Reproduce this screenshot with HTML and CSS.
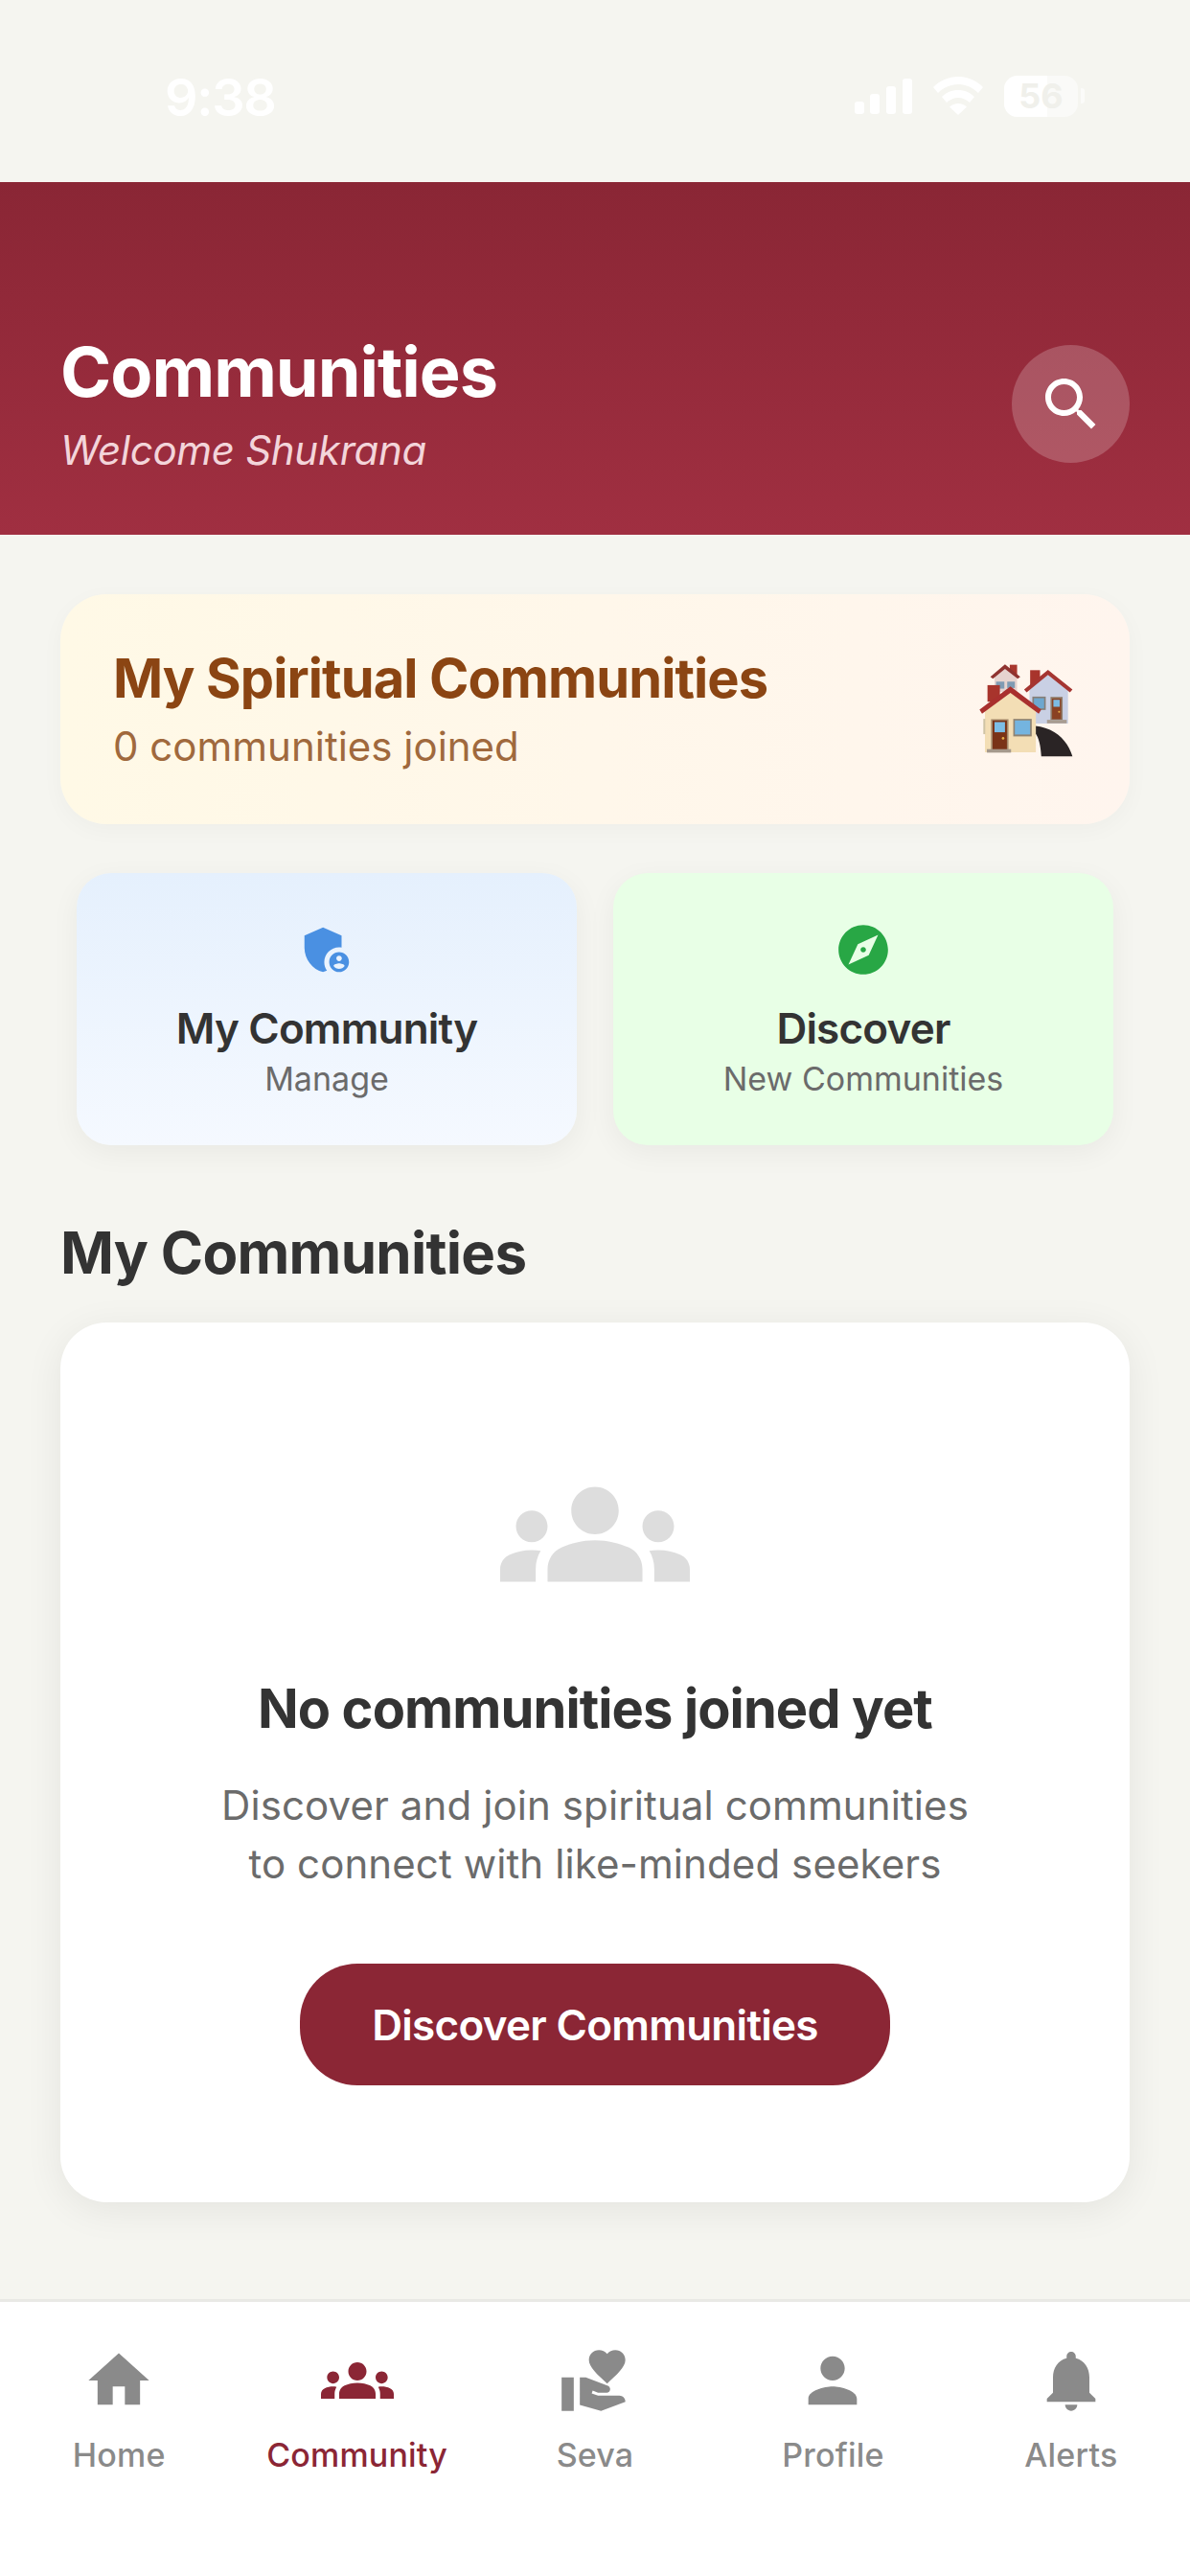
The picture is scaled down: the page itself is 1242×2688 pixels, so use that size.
FILE: index.html
```html
<!DOCTYPE html>
<html lang="en">
<head>
<meta charset="utf-8">
<title>Communities</title>
<link rel="stylesheet" href="styles.css">
</head>
<body>
<div class="app">
  <div class="status">
    <span class="time">9:38</span>
    <div class="status-icons">
      <svg class="signal" viewBox="0 0 60 37"><rect x="0" y="24" width="10" height="13" rx="3"/><rect x="16" y="16" width="10" height="21" rx="3"/><rect x="33" y="8" width="10" height="29" rx="3"/><rect x="50" y="0" width="10" height="37" rx="3"/></svg>
      <svg class="wifi" viewBox="0 0 52 40"><path d="M26 0C16 0 7 4 0 11l5 6c5.500-5.500 13-9 21-9s15.500 3.500 21 9l5-6C45 4 36 0 26 0z"/><path d="M26 14c-6.500 0-12.500 2.500-17 7l5 6c3-3 7.500-5 12-5s9 2 12 5l5-6c-4.500-4.500-10.500-7-17-7z"/><path d="M26 28c-3.500 0-6.500 1.300-9 3.500L26 40l9-8.500C32.500 29.300 29.500 28 26 28z"/></svg>
      <div class="battery-wrap">
        <div class="battery"><div class="battery-fill"></div><span class="battery-num">56</span></div>
        <div class="battery-cap"></div>
      </div>
    </div>
  </div>

  <header class="header">
    <div class="header-text">
      <h1 class="title">Communities</h1>
      <p class="welcome">Welcome Shukrana</p>
    </div>
    <div class="search">
      <svg class="search-icon" viewBox="0 0 24 24"><path d="M15.500 14h-.79l-.28-.27C15.410 12.590 16 11.110 16 9.500 16 5.910 13.090 3 9.500 3S3 5.910 3 9.500 5.910 16 9.500 16c1.610 0 3.090-.59 4.230-1.570l.27.28v.79l5 4.990L20.490 19l-4.990-5zm-6 0C7.010 14 5 11.990 5 9.500S7.010 5 9.500 5 14 7.010 14 9.500 11.990 14 9.500 14z"/></svg>
    </div>
  </header>

  <main class="main">
    <section class="banner">
      <div>
        <h2 class="banner-title">My Spiritual Communities</h2>
        <p class="banner-sub">0 communities joined</p>
      </div>
      <svg class="houses" viewBox="238 160 296 298">
        <!-- back house -->
        <rect x="333" y="165" width="23" height="35" fill="#a8372e"/>
        <path d="M285 200 L318 172 L356 200 V250 H285Z" fill="#e6d3cf"/>
        <rect x="290" y="218" width="26" height="22" fill="#7f9bb3"/>
        <rect x="325" y="218" width="24" height="20" fill="#7f9bb3"/>
        <path d="M272 203 L318 164 L366 203 L358 209 L318 178 L280 209Z" fill="#8f3330"/>
        <!-- right house -->
        <rect x="397" y="182" width="31" height="48" fill="#a8342c"/>
        <path d="M395 240 L453 192 L516 240 V350 H395Z" fill="#c9d0e4"/>
        <rect x="404" y="265" width="42" height="42" fill="#867f78"/>
        <rect x="409" y="270" width="32" height="32" fill="#6da7cf"/>
        <rect x="461" y="266" width="38" height="72" fill="#8f7a68"/>
        <rect x="466" y="271" width="28" height="65" fill="#8a4122"/>
        <rect x="470" y="275" width="20" height="22" fill="#7cbbe3"/>
        <circle cx="488" cy="313" r="3" fill="#e8b04a"/>
        <rect x="450" y="338" width="62" height="11" fill="#a89c90"/>
        <path d="M378 243 L453 181 L530 243 L522 252 L453 197 L386 252Z" fill="#a53531"/>
        <!-- road -->
        <path d="M413 357 C470 362 515 400 530 453 H432 C430 420 425 395 413 380Z" fill="#2a2425"/>
        <!-- front house -->
        <rect x="263" y="229" width="39" height="52" fill="#a8342c"/>
        <path d="M255 310 L335 250 L415 310 V440 H255Z" fill="#f3deb5"/>
        <rect x="274" y="336" width="55" height="96" fill="#a58a6c"/>
        <rect x="279" y="340" width="45" height="92" fill="#7a3317"/>
        <rect x="285" y="345" width="33" height="32" fill="#7cbde6"/>
        <circle cx="312" cy="396" r="4" fill="#e8b04a"/>
        <rect x="344" y="335" width="58" height="55" fill="#8f8372"/>
        <rect x="349" y="340" width="48" height="44" fill="#74b4df"/>
        <rect x="261" y="430" width="76" height="11" fill="#a5998c"/>
        <rect x="250" y="335" width="6" height="48" fill="#cfc3a5"/>
        <path d="M238 306 L335 233 L432 306 L424 319 L335 253 L246 319Z" fill="#a9302e"/>
      </svg>
    </section>

    <div class="actions">
      <article class="action action-blue">
        <svg class="action-icon icon-blue" viewBox="0 0 24 24"><path d="M17 11c.34 0 .67.04 1 .09V6.270L10.500 3 3 6.270v4.910c0 4.540 3.200 8.790 7.500 9.820.55-.13 1.080-.32 1.600-.55-.69-.98-1.100-2.170-1.100-3.450 0-3.310 2.690-6 6-6z"/><path d="M17 13c-2.210 0-4 1.790-4 4s1.790 4 4 4 4-1.790 4-4-1.790-4-4-4zm0 1.380c.62 0 1.120.51 1.120 1.120s-.51 1.120-1.120 1.120-1.120-.51-1.120-1.120.5-1.120 1.120-1.120zm0 5.370c-.93 0-1.740-.46-2.240-1.170.05-.72 1.510-1.080 2.240-1.080s2.190.36 2.240 1.080c-.5.71-1.310 1.170-2.240 1.170z"/></svg>
        <h3 class="action-title">My Community</h3>
        <p class="action-sub">Manage</p>
      </article>
      <article class="action action-green">
        <svg class="action-icon icon-green" viewBox="0 0 24 24"><path d="M12 10.900c-.61 0-1.100.49-1.100 1.100s.49 1.100 1.100 1.100c.61 0 1.100-.49 1.100-1.100s-.49-1.100-1.100-1.100zM12 2C6.480 2 2 6.480 2 12s4.480 10 10 10 10-4.480 10-10S17.520 2 12 2zm2.190 12.190L6 18l3.810-8.190L18 6l-3.810 8.190z"/></svg>
        <h3 class="action-title">Discover</h3>
        <p class="action-sub">New Communities</p>
      </article>
    </div>

    <h2 class="section-title">My Communities</h2>

    <section class="empty">
      <svg class="empty-icon" viewBox="0 0 24 24"><path d="M12 12.750c1.630 0 3.070.39 4.240.9 1.080.48 1.760 1.560 1.760 2.730V18H6v-1.610c0-1.180.68-2.260 1.760-2.730 1.170-.52 2.610-.91 4.240-.91zM4 13c1.100 0 2-.9 2-2s-.9-2-2-2-2 .9-2 2 .9 2 2 2zm1.130 1.100c-.37-.06-.74-.1-1.130-.1-.99 0-1.930.21-2.780.58C.48 14.900 0 15.620 0 16.430V18h4.500v-1.610c0-.83.23-1.610.63-2.290zM20 13c1.100 0 2-.9 2-2s-.9-2-2-2-2 .9-2 2 .9 2 2 2zm4 3.430c0-.81-.48-1.530-1.220-1.850-.85-.37-1.790-.58-2.780-.58-.39 0-.76.04-1.130.1.4.68.63 1.460.63 2.290V18H24v-1.570zM12 6c1.660 0 3 1.340 3 3s-1.340 3-3 3-3-1.340-3-3 1.340-3 3-3z"/></svg>
      <h3 class="empty-title">No communities joined yet</h3>
      <p class="empty-text">Discover and join spiritual communities<br>to connect with like-minded seekers</p>
      <button class="cta">Discover Communities</button>
    </section>
  </main>

  <nav class="tabs">
    <div class="tab">
      <svg class="tab-icon" viewBox="0 0 24 24"><path d="M10 20v-6h4v6h5v-8h3L12 3 2 12h3v8z"/></svg>
      <span class="tab-label">Home</span>
    </div>
    <div class="tab tab-active">
      <svg class="tab-icon" viewBox="0 0 24 24"><path d="M12 12.750c1.630 0 3.070.39 4.240.9 1.080.48 1.760 1.560 1.760 2.730V18H6v-1.610c0-1.180.68-2.260 1.760-2.730 1.170-.52 2.610-.91 4.240-.91zM4 13c1.100 0 2-.9 2-2s-.9-2-2-2-2 .9-2 2 .9 2 2 2zm1.130 1.100c-.37-.06-.74-.1-1.130-.1-.99 0-1.930.21-2.780.58C.48 14.900 0 15.620 0 16.430V18h4.500v-1.610c0-.83.23-1.610.63-2.290zM20 13c1.100 0 2-.9 2-2s-.9-2-2-2-2 .9-2 2 .9 2 2 2zm4 3.430c0-.81-.48-1.530-1.220-1.850-.85-.37-1.790-.58-2.780-.58-.39 0-.76.04-1.130.1.4.68.63 1.460.63 2.290V18H24v-1.570zM12 6c1.660 0 3 1.340 3 3s-1.340 3-3 3-3-1.340-3-3 1.340-3 3-3z"/></svg>
      <span class="tab-label">Community</span>
    </div>
    <div class="tab">
      <svg class="tab-icon" viewBox="0 0 24 24"><path d="M1 11h4v11H1zm15-7.750C16.650 2.490 17.660 2 18.700 2 20.550 2 22 3.450 22 5.300c0 2.270-2.910 4.900-6 7.700-3.090-2.810-6-5.440-6-7.700C10 3.450 11.450 2 13.300 2c1.040 0 2.050.49 2.700 1.250zM20 17h-7l-2.090-.73.33-.94L13 16h2.820c.65 0 1.180-.53 1.180-1.180 0-.49-.31-.93-.77-1.110L8.970 11H7v9.020L14 22l8.010-3c-.01-1.100-.9-2-2.010-2z"/></svg>
      <span class="tab-label">Seva</span>
    </div>
    <div class="tab">
      <svg class="tab-icon" viewBox="0 0 24 24"><path d="M12 12c2.210 0 4-1.790 4-4s-1.790-4-4-4-4 1.790-4 4 1.790 4 4 4zm0 2c-2.670 0-8 1.340-8 4v2h16v-2c0-2.660-5.330-4-8-4z"/></svg>
      <span class="tab-label">Profile</span>
    </div>
    <div class="tab">
      <svg class="tab-icon" viewBox="0 0 24 24"><path d="M12 22c1.100 0 2-.9 2-2h-4c0 1.100.89 2 2 2zm6-6v-5c0-3.070-1.640-5.640-4.500-6.320V4c0-.83-.67-1.500-1.500-1.500s-1.500.67-1.500 1.500v.68C7.630 5.360 6 7.920 6 11v5l-2 2v1h16v-1l-2-2z"/></svg>
      <span class="tab-label">Alerts</span>
    </div>
  </nav>
</div>
</body>
</html>
```

FILE: styles.css
```css
* { box-sizing: border-box; }
html, body { margin: 0; padding: 0; }
body { font-family: Inter, "Liberation Sans", sans-serif; background: #f5f5f0; }
h1, h2, h3, p { margin: 0; font-weight: inherit; }

.app { width: 1242px; height: 2688px; display: flex; flex-direction: column; background: #f5f5f0; overflow: hidden; }

.status { height: 190px; flex: none; display: flex; justify-content: space-between; align-items: center; padding: 20px 110px 10px 172px; }
.time { margin-top: 4px; font-size: 54px; font-weight: 600; color: #fff; line-height: 60px; letter-spacing: -1.3px; }
.status-icons { display: flex; align-items: center; gap: 22px; }
.signal { width: 60px; height: 37px; fill: #fff; }
.wifi { width: 52px; height: 40px; fill: #fff; }
.battery-wrap { display: flex; align-items: center; gap: 3px; }
.battery { position: relative; width: 77px; height: 43px; border-radius: 14px; background: rgba(255,255,255,.5); overflow: hidden; }
.battery-fill { position: absolute; left: 0; top: 0; bottom: 0; width: 58%; background: #fff; }
.battery-num { position: relative; display: block; text-align: center; font-size: 36px; line-height: 43px; font-weight: 700; color: #f0f0eb; }
.battery-cap { width: 4px; height: 16px; border-radius: 0 3px 3px 0; background: rgba(255,255,255,.6); }

.header { height: 368px; flex: none; display: flex; justify-content: space-between; align-items: flex-start; padding: 158px 63px 60px; background: linear-gradient(180deg, #8a2635, #a02f41); }
.title { font-size: 72px; line-height: 80px; font-weight: 700; color: #fff; letter-spacing: -1px; }
.welcome { margin-top: 14px; font-size: 42px; line-height: 56px; font-style: italic; color: #f3d5da; letter-spacing: -.3px; }
.search { margin-top: 12px; width: 123px; height: 123px; border-radius: 50%; background: rgba(255,255,255,.2); display: flex; align-items: center; justify-content: center; }
.search-icon { width: 72px; height: 72px; fill: #fff; }

.main { flex: 1; padding: 62px 63px 0; display: flex; flex-direction: column; }

.banner { height: 240px; flex: none; border-radius: 48px; padding: 0 58px 0 55px; display: flex; align-items: center; justify-content: space-between; background: linear-gradient(90deg, #fff9e6, #fff5ee); box-shadow: 0 6px 24px rgba(0,0,0,.03); }
.banner-title { font-size: 56px; line-height: 66px; font-weight: 700; color: #8b4513; letter-spacing: -.9px; }
.banner-sub { margin-top: 11px; font-size: 42px; line-height: 54px; color: #a0693d; }
.houses { margin-top: 3px; width: 99px; height: 99px; }

.actions { margin-top: 51px; padding: 0 17px; display: flex; gap: 38px; }
.action { flex: 1; height: 284px; border-radius: 36px; display: flex; flex-direction: column; align-items: center; padding-top: 49px; box-shadow: 0 8px 30px rgba(0,0,0,.05); }
.action-blue { background: linear-gradient(180deg, #e5f0fd, #f5f9ff); }
.action-green { background: #e8ffe6; }
.action-icon { width: 62px; height: 62px; }
.icon-blue { fill: #4a90e2; }
.icon-green { fill: #28a745; }
.action-title { margin-top: 23px; font-size: 44px; line-height: 56px; font-weight: 600; color: #333; letter-spacing: -.8px; }
.action-sub { margin-top: 3px; font-size: 34px; line-height: 44px; color: #6b6b6b; }

.section-title { margin-top: 77px; font-size: 60px; line-height: 70px; font-weight: 700; color: #333; letter-spacing: -.7px; }

.empty { margin-top: 38px; height: 918px; flex: none; background: #fff; border-radius: 48px; display: flex; flex-direction: column; align-items: center; padding-top: 122px; box-shadow: 0 8px 40px rgba(0,0,0,.07); }
.empty-icon { width: 198px; height: 198px; fill: #ddd; }
.empty-title { margin-top: 47px; font-size: 56px; line-height: 72px; font-weight: 700; color: #333; letter-spacing: -.9px; }
.empty-text { margin-top: 34px; font-size: 42px; line-height: 61px; color: #6b6b6b; text-align: center; letter-spacing: .1px; }
.cta { margin-top: 74px; width: 616px; height: 127px; border: 0; border-radius: 60px; background: #8b2635; color: #fff; font-family: inherit; font-size: 44px; font-weight: 600; letter-spacing: -.7px; }

.tabs { height: 289px; flex: none; background: #fff; border-top: 3px solid #e9e9e5; display: flex; padding-top: 44px; }
.tab { flex: 1; display: flex; flex-direction: column; align-items: center; color: #8a8a8a; }
.tab-icon { width: 76px; height: 76px; fill: currentColor; }
.tab-active { color: #8b2635; }
.tab-label { margin-top: 18px; font-size: 34px; line-height: 44px; font-weight: 500; letter-spacing: .2px; }
```
